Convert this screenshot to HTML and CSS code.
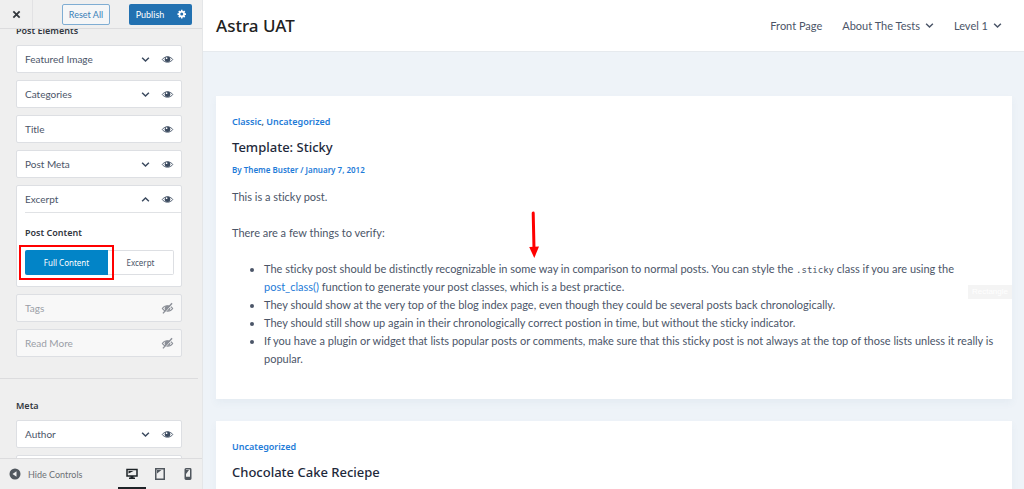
FILE: index.html
```html
<!DOCTYPE html>
<html lang="en">
<head>
  <meta charset="UTF-8">
  <meta name="viewport" content="width=device-width, initial-scale=1.0">
  <title>Customize: Astra UAT</title>
  <link rel="stylesheet" href="styles.css">
</head>
<body>
  <!-- shared icons -->
  <svg class="sprite" aria-hidden="true">
    <symbol id="chevron" viewBox="0 0 8 8">
      <path d="M1 2.400 4 5.400 7 2.400" fill="none" stroke="currentColor" stroke-width="1.300"/>
    </symbol>
    <symbol id="eye" viewBox="0 0 20 20">
      <path d="M2 10C5.500 4.500 14.500 4.500 18 10 14.500 15.500 5.500 15.500 2 10z" fill="none" stroke="currentColor" stroke-width="1.400"/>
      <circle cx="10" cy="9.700" r="4.300" fill="currentColor"/>
      <circle cx="8.600" cy="8" r="1.300" fill="#fff"/>
    </symbol>
    <symbol id="eye-off" viewBox="0 0 20 20">
      <path d="M2 10C5.500 4.500 14.500 4.500 18 10 14.500 15.500 5.500 15.500 2 10z" fill="none" stroke="currentColor" stroke-width="1.600"/>
      <circle cx="10" cy="9.700" r="4.300" fill="currentColor"/>
      <path d="M4.500 18 18.500 2.500" stroke="#f8f8f8" stroke-width="1.500"/>
      <path d="M3 17.500 17 2" stroke="currentColor" stroke-width="2.200"/>
    </symbol>
  </svg>

  <div class="customizer">
    <aside class="sidebar">
      <header class="sidebar-header">
        <button class="close-btn" aria-label="Close">
          <svg viewBox="0 0 10 10"><path d="M1.500 1.500l7 7M8.500 1.500l-7 7" stroke="currentColor" stroke-width="2"/></svg>
        </button>
        <div class="header-actions">
          <button class="reset-btn">Reset All</button>
          <div class="publish">
            <button class="publish-btn">Publish</button>
            <button class="gear-btn" aria-label="Publish settings">
              <svg viewBox="0 0 20 20"><path fill="currentColor" fill-rule="evenodd" d="M18 12h-2.200c-.2.600-.4 1.200-.7 1.700l1.500 1.500-2.400 2.400-1.500-1.500c-.5.300-1.100.5-1.700.7V19H8v-2.200c-.6-.2-1.200-.4-1.700-.7l-1.500 1.500-2.400-2.400 1.500-1.500c-.3-.5-.5-1.100-.7-1.700H1V8.500h2.200c.2-.6.4-1.200.7-1.700L2.400 5.300l2.400-2.400 1.500 1.500c.5-.3 1.100-.5 1.700-.7V1.500h3v2.200c.6.2 1.200.4 1.700.7l1.500-1.500 2.400 2.400-1.500 1.500c.3.500.5 1.100.7 1.700H18zM9.500 13a3 3 0 1 0 0-6 3 3 0 0 0 0 6z"/></svg>
            </button>
          </div>
        </div>
      </header>

      <div class="controls">
        <h2 class="control-title">Post Elements</h2>
        <ul class="sortable">
          <li class="item">
            <div class="item-row"><span>Featured Image</span>
              <button class="icon-btn" aria-label="Expand"><svg class="chevron"><use href="#chevron"/></svg></button>
              <button class="icon-btn" aria-label="Toggle"><svg class="eye"><use href="#eye"/></svg></button>
            </div>
          </li>
          <li class="item">
            <div class="item-row"><span>Categories</span>
              <button class="icon-btn" aria-label="Expand"><svg class="chevron"><use href="#chevron"/></svg></button>
              <button class="icon-btn" aria-label="Toggle"><svg class="eye"><use href="#eye"/></svg></button>
            </div>
          </li>
          <li class="item">
            <div class="item-row"><span>Title</span>
              <button class="icon-btn" aria-label="Toggle"><svg class="eye"><use href="#eye"/></svg></button>
            </div>
          </li>
          <li class="item">
            <div class="item-row"><span>Post Meta</span>
              <button class="icon-btn" aria-label="Expand"><svg class="chevron"><use href="#chevron"/></svg></button>
              <button class="icon-btn" aria-label="Toggle"><svg class="eye"><use href="#eye"/></svg></button>
            </div>
          </li>
          <li class="item">
            <div class="item-row"><span>Excerpt</span>
              <button class="icon-btn" aria-label="Collapse"><svg class="chevron up"><use href="#chevron"/></svg></button>
              <button class="icon-btn" aria-label="Toggle"><svg class="eye"><use href="#eye"/></svg></button>
            </div>
            <div class="item-body">
              <h3 class="control-title">Post Content</h3>
              <div class="selector">
                <button class="option active">Full Content</button>
                <button class="option">Excerpt</button>
                <span class="highlight"></span>
              </div>
            </div>
          </li>
          <li class="item off">
            <div class="item-row"><span>Tags</span>
              <button class="icon-btn" aria-label="Toggle"><svg class="eye"><use href="#eye-off"/></svg></button>
            </div>
          </li>
          <li class="item off">
            <div class="item-row"><span>Read More</span>
              <button class="icon-btn" aria-label="Toggle"><svg class="eye"><use href="#eye-off"/></svg></button>
            </div>
          </li>
        </ul>

        <hr class="divider">

        <h2 class="control-title">Meta</h2>
        <ul class="sortable">
          <li class="item">
            <div class="item-row"><span>Author</span>
              <button class="icon-btn" aria-label="Expand"><svg class="chevron"><use href="#chevron"/></svg></button>
              <button class="icon-btn" aria-label="Toggle"><svg class="eye"><use href="#eye"/></svg></button>
            </div>
          </li>
          <li class="item"><div class="item-row"></div></li>
        </ul>
      </div>

      <footer class="sidebar-footer">
        <button class="hide-btn">
          <svg viewBox="0 0 12 12"><circle cx="6" cy="6" r="5.500" fill="#50575e"/><path d="M7.500 3.200v5.600L3.500 6z" fill="#f0f0f0"/></svg>
          Hide Controls
        </button>
        <div class="devices">
          <button class="device active" aria-label="Desktop">
            <svg width="12" height="12" viewBox="0 0 12 12"><path d="M1 1.500h10v6.500H1z" fill="none" stroke="currentColor" stroke-width="1.500"/><path d="M4.500 8h3v1.500H9V11H3V9.500h1.500zM2.500 3h5L2.500 5.500z" fill="currentColor"/></svg>
          </button>
          <button class="device" aria-label="Tablet">
            <svg width="12" height="12" viewBox="0 0 12 12"><path d="M1.750.75h8.500v10.500h-8.500z" fill="none" stroke="currentColor" stroke-width="1.500"/><path d="M3 2h4.500L3 5.500z" fill="currentColor"/></svg>
          </button>
          <button class="device" aria-label="Mobile">
            <svg width="12" height="12" viewBox="0 0 12 12"><rect x="3.250" y=".75" width="5.500" height="10.500" rx=".7" fill="none" stroke="currentColor" stroke-width="1.500"/><path d="M4 2h3L4 6zM3.500 8.800h5V11h-5z" fill="currentColor"/></svg>
          </button>
        </div>
      </footer>
    </aside>

    <main class="preview">
      <header class="site-header">
        <a class="site-title" href="#">Astra UAT</a>
        <nav class="site-nav">
          <a href="#">Front Page</a>
          <a href="#">About The Tests <svg class="chevron"><use href="#chevron"/></svg></a>
          <a href="#">Level 1 <svg class="chevron"><use href="#chevron"/></svg></a>
        </nav>
      </header>

      <div class="posts">
        <article class="post">
          <div class="cats"><a href="#">Classic</a>, <a href="#">Uncategorized</a></div>
          <h2 class="post-title">Template: Sticky</h2>
          <div class="post-meta">By <a href="#">Theme Buster</a> / January 7, 2012</div>
          <p>This is a sticky post.</p>
          <p>There are a few things to verify:</p>
          <ul class="post-list">
            <li>The sticky post should be distinctly recognizable in some way in comparison to normal posts. You can style the <code>.sticky</code> class if you are using the <a href="#">post_class()</a> function to generate your post classes, which is a best practice.</li>
            <li>They should show at the very top of the blog index page, even though they could be several posts back chronologically.</li>
            <li>They should still show up again in their chronologically correct postion in time, but without the sticky indicator.</li>
            <li>If you have a plugin or widget that lists popular posts or comments, make sure that this sticky post is not always at the top of those lists unless it really is popular.</li>
          </ul>
          <svg class="arrow" width="12" height="48" viewBox="0 0 12 48"><path d="M5.200 2 6 38" stroke="#f00" stroke-width="3" stroke-linecap="round"/><path d="M1.200 36 11 35.600 6.300 47z" fill="#f00"/></svg>
          <span class="shape-label">Rectangle</span>
        </article>

        <article class="post">
          <div class="cats"><a href="#">Uncategorized</a></div>
          <h2 class="post-title">Chocolate Cake Reciepe</h2>
        </article>
      </div>
    </main>
  </div>
</body>
</html>
```
FILE: styles.css
```css
* {
  box-sizing: border-box;
}

body {
  margin: 0;
  font-family: Lato, "Noto Sans", sans-serif;
  font-size: 11px;
  font-variant-ligatures: none;
  color: #4b5568;
}

h2, h3, p, ul {
  margin: 0;
  padding: 0;
}

button {
  margin: 0;
  padding: 0;
  border: 0;
  background: none;
  font-family: inherit;
  color: inherit;
}

a {
  color: #1e7bd8;
  text-decoration: none;
}

.control-title,
.option,
.site-title,
.cats,
.post-title,
.post-meta {
  font-family: "Noto Sans", "Open Sans", sans-serif;
}

.sprite {
  display: none;
}

.customizer {
  display: flex;
  height: 100vh;
  overflow: hidden;
}

/* sidebar */
.sidebar {
  display: flex;
  flex-direction: column;
  flex: 0 0 203px;
  background: #efefef;
  border-right: 1px solid #e4e6e8;
}

.sidebar-header {
  display: flex;
  flex: none;
  height: 29px;
  background: #efefef;
  border-bottom: 1px solid #dcdcde;
  z-index: 1;
}

.close-btn {
  width: 33px;
  border-right: 1px solid #e2e2e4;
  color: #32373c;
}

.close-btn svg {
  width: 9px;
  height: 9px;
}

.header-actions {
  display: flex;
  flex: 1;
  justify-content: space-between;
  align-items: center;
  padding: 0 10px 0 29px;
}

.reset-btn {
  width: 48px;
  height: 21px;
  border: 1px solid #7fadd3;
  border-radius: 2px;
  background: #f5f6f7;
  color: #3a7fb8;
  font-size: 9px;
}

.publish {
  display: flex;
  width: 63px;
  height: 21px;
  border-radius: 2px;
  background: #2271b1;
  color: #fff;
}

.publish-btn {
  flex: 1;
  font-size: 9px;
}

.gear-btn {
  width: 21px;
}

.gear-btn svg {
  display: block;
  width: 10px;
  height: 10px;
  margin: 0 auto;
}

.controls {
  flex: 1;
  min-height: 0;
  margin-top: -6px;
  padding: 0 20px 0 16px;
  overflow: hidden;
}

.control-title {
  color: #32373f;
  font-size: 9px;
  font-weight: 600;
  line-height: 16px;
}

.sortable {
  display: flex;
  flex-direction: column;
  gap: 7px;
  margin-top: 6px;
  list-style: none;
}

.item {
  border: 1px solid #dddfe3;
  border-radius: 2px;
  background: #fff;
}

.item-row {
  display: flex;
  align-items: center;
  gap: 10px;
  height: 26px;
  padding: 0 8px;
  font-size: 10px;
}

.item-row span {
  flex: 1;
}

.icon-btn {
  display: flex;
  justify-content: center;
  width: 12px;
  color: #3b4a5f;
}

.chevron {
  width: 9px;
  height: 9px;
}

.chevron.up {
  transform: rotate(180deg);
}

.eye {
  flex: none;
  width: 13px;
  height: 13px;
}

.item-body {
  margin-left: 8px;
  padding: 12px 7px 11px 0;
  border-top: 1px solid #e0e2e5;
}

.selector {
  position: relative;
  display: flex;
  height: 25px;
  margin-top: 9px;
}

.option {
  flex: 1;
  border: 1px solid #dddfe3;
  border-left: 0;
  border-radius: 0 2px 2px 0;
  background: #fff;
  font-size: 8px;
}

.option.active {
  flex: 0 0 83px;
  border: 0;
  border-radius: 2px 0 0 2px;
  background: #0284c7;
  color: #fff;
}

/* red marker around the selected option */
.highlight {
  position: absolute;
  top: -5px;
  left: -6px;
  width: 95px;
  height: 35px;
  border: 2px solid #f00;
}

.item.off {
  background: #f8f8f8;
  color: #9a9ea6;
}

.off .icon-btn {
  color: #8b8f97;
}

.divider {
  margin: 21px -16px 19px;
  border: 0;
  border-top: 1px solid #dcdcde;
}

.sidebar-footer {
  display: flex;
  justify-content: space-between;
  flex: none;
  height: 31px;
  background: #efefef;
  border-top: 1px solid #dcdcde;
}

.hide-btn {
  display: flex;
  align-items: center;
  gap: 7px;
  padding-left: 9px;
  color: #6c7075;
  font-size: 9px;
}

.hide-btn svg {
  width: 12px;
  height: 12px;
}

.devices {
  display: flex;
}

.device {
  display: flex;
  align-items: center;
  justify-content: center;
  width: 28px;
  border: solid transparent;
  border-width: 2px 0;
  color: #50575e;
}

.device.active {
  border-bottom-color: #1d2327;
  color: #1d2327;
}

/* site preview */
.preview {
  flex: 1;
  min-width: 0;
  background: #eef3f8;
}

.site-header {
  display: flex;
  justify-content: space-between;
  align-items: center;
  height: 52px;
  padding: 0 22px 0 13px;
  background: #fff;
  border-bottom: 1px solid #e6eaee;
}

.site-title {
  color: #222;
  font-size: 17px;
  font-weight: 500;
}

.site-nav {
  display: flex;
  gap: 20px;
}

.site-nav a {
  display: flex;
  align-items: center;
  gap: 5px;
  color: #4b5568;
}

.posts {
  display: flex;
  flex-direction: column;
  gap: 22px;
  padding: 44px 12px 0 13px;
}

.post {
  position: relative;
  padding: 17px 16px 31px;
  background: #fff;
  box-shadow: 0 4px 8px rgba(60, 90, 130, 0.05);
}

.cats {
  font-size: 9px;
  font-weight: 600;
  line-height: 18px;
}

.post-title {
  margin-top: 6px;
  color: #1e293b;
  font-size: 13px;
  font-weight: 500;
  line-height: 20px;
}

.post-meta {
  margin: 4px 0 9px;
  color: #1e7bd8;
  font-size: 8px;
  font-weight: 600;
  line-height: 18px;
}

.post p {
  margin-bottom: 18px;
  line-height: 18px;
}

.post-list {
  padding-left: 32px;
  line-height: 18px;
}

.post-list code {
  font-family: "DejaVu Sans Mono", monospace;
  font-size: 9px;
  line-height: 1;
}

.arrow {
  position: absolute;
  top: 115px;
  left: 312px;
}

.shape-label {
  position: absolute;
  top: 189px;
  right: 0;
  padding: 0 4px;
  background: #f4f4f4;
  color: #fff;
  font-family: "Liberation Sans", sans-serif;
  font-size: 8px;
  line-height: 14px;
}
```
